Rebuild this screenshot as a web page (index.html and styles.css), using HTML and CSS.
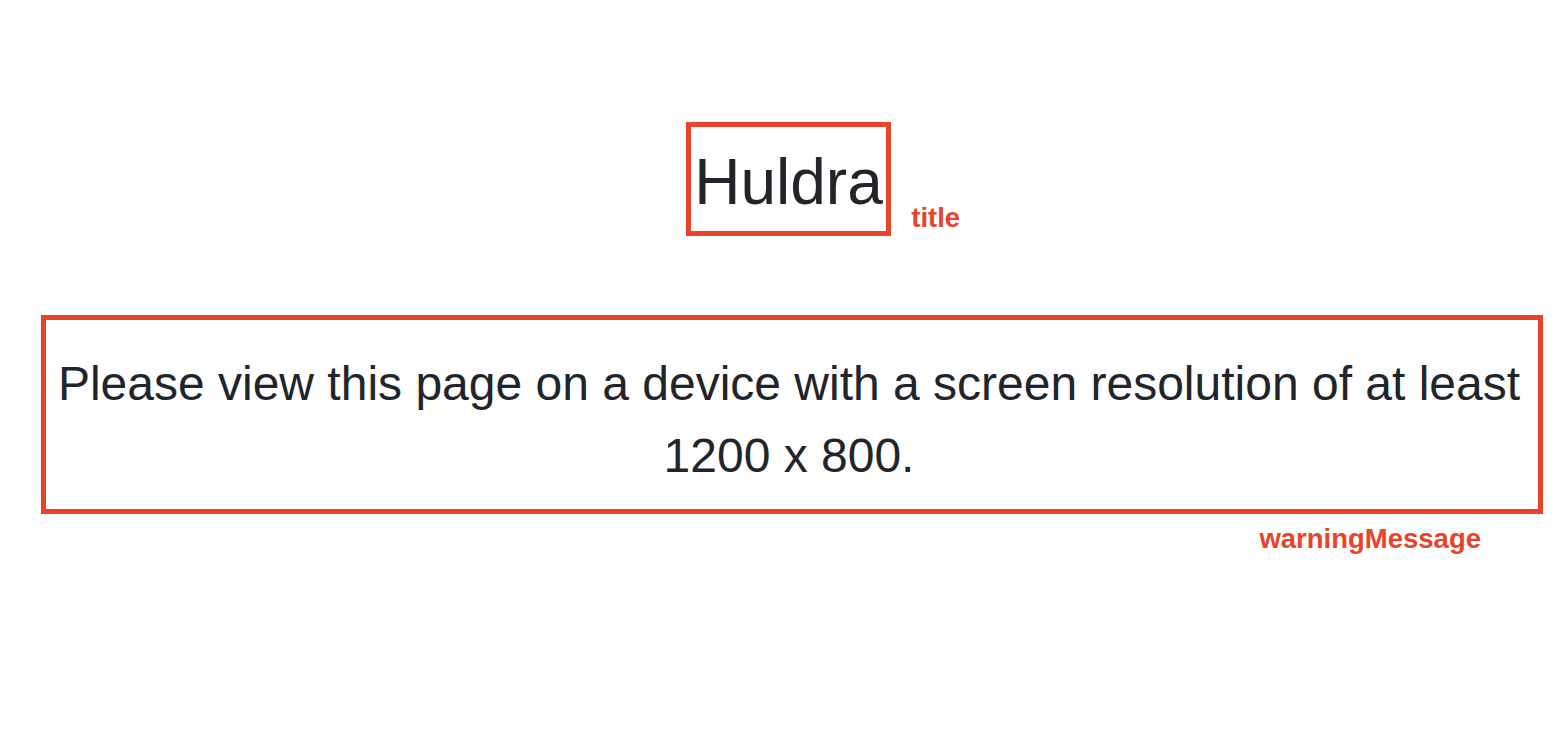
FILE: index.html
```html
<!DOCTYPE html>
<html lang="en">
<head>
<meta charset="utf-8">
<title>Huldra</title>
<link rel="stylesheet" href="styles.css">
</head>
<body>
<main class="page">
  <div class="title-row">
    <div class="title-box">
      <h1 class="title">Huldra</h1>
      <span class="tag tag-title">title</span>
    </div>
  </div>
  <div class="warning-box">
    <p class="warning">Please view this page on a device with a screen resolution of at least 1200 x 800.</p>
  </div>
  <div class="warning-tag-row">
    <span class="tag-warning">warningMessage</span>
  </div>
</main>
</body>
</html>
```

FILE: styles.css
```css
html, body {
  margin: 0;
  padding: 0;
  background: #ffffff;
}

body {
  font-family: "Liberation Sans", Arial, Helvetica, sans-serif;
  color: #212529;
}

.page {
  box-sizing: border-box;
  min-height: 100vh;
  display: flex;
  flex-direction: column;
  padding: 122px 25px 0 41px;
}

.title-row {
  display: flex;
  justify-content: center;
  padding-right: 7px;
}

.title-box {
  position: relative;
  border: 5px solid #e8432b;
  padding: 17px 3px 10px 3px;
}

.title {
  margin: 0;
  font-size: 64px;
  font-weight: 400;
  line-height: 77px;
  white-space: nowrap;
}

.warning-box {
  margin-top: 79px;
  border: 5px solid #e8432b;
  padding: 28px 6px 17px 0;
}

.warning {
  margin: 0;
  font-size: 48px;
  font-weight: 400;
  line-height: 72px;
  text-align: center;
}

.tag {
  position: absolute;
  left: 100%;
  top: 75.4px;
  margin-left: 25.5px;
  line-height: normal;
}

.tag,
.tag-warning {
  color: #e8432b;
  font-weight: 700;
  font-size: 27.5px;
  white-space: nowrap;
}

.warning-tag-row {
  display: flex;
  justify-content: flex-end;
  margin-top: 9.1px;
  padding-right: 62px;
  line-height: normal;
}
```
